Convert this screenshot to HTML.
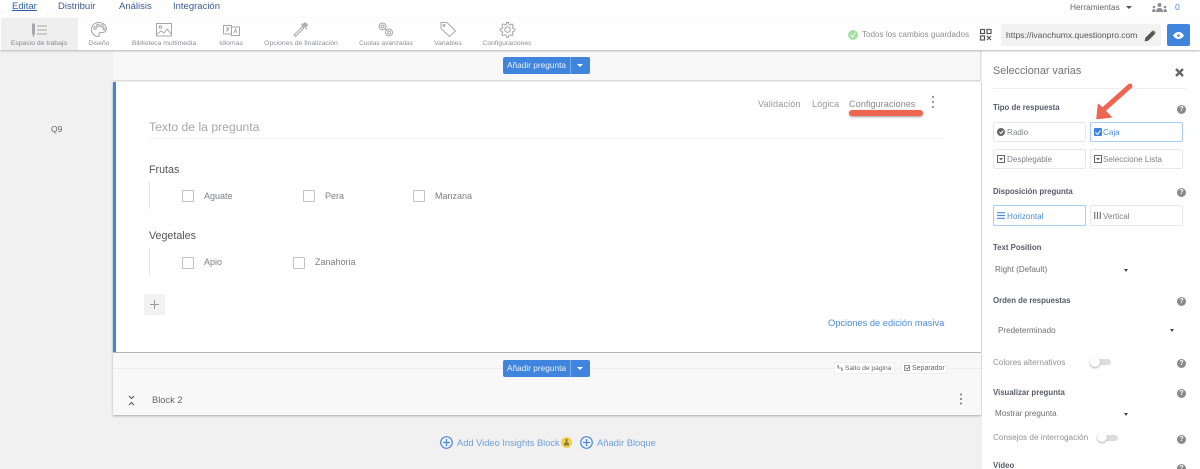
<!DOCTYPE html>
<html><head><meta charset="utf-8">
<style>
html,body{margin:0;padding:0;width:1200px;height:469px;overflow:hidden;background:#f1f1f1;font-family:"Liberation Sans",sans-serif;color:#666}
#w{position:absolute;left:0;top:0;width:1200px;height:469px;overflow:hidden;filter:blur(.3px)}
.a{position:absolute}
.t{position:absolute;white-space:nowrap;line-height:12px}
.nav{font-size:9.500px;color:#3c5a94;top:1px}
.tb{font-size:6.800px;color:#8a8f96;top:39px;line-height:10px;transform:translateX(-50%)}
.btn{position:absolute;width:87px;height:17px;background:#3f85de;border-radius:2px;color:#eaf2fc;font-size:8.300px;line-height:17px;box-sizing:border-box;padding-left:4px;white-space:nowrap}
.btn i{position:absolute;left:67px;top:0;width:1px;height:17px;background:#7aa9e8}
.btn b{position:absolute;left:74px;top:7px;border:3px solid transparent;border-top:3px solid #fff;border-bottom:0}
.box{position:absolute;width:10px;height:10px;border:1px solid #c2c4c9;border-radius:1px;background:#fff}
.opt{font-size:9px;color:#7a7f86}
.h{font-size:7.800px;font-weight:bold;color:#555b66}
.q{position:absolute;width:9px;height:9px;border-radius:50%;background:#8a8a8a;color:#fff;font-size:7px;line-height:9px;text-align:center;font-weight:bold;left:1177px}
.rb{position:absolute;height:20px;border:1px solid #e8e8e8;border-radius:2px;background:#fff;box-sizing:border-box;width:95px}
.rt{font-size:8.100px;color:#7d8288}
.sel{border-color:#a9cdf5}
.caret{position:absolute;border:2.500px solid transparent;border-top:3px solid #444;border-bottom:0}
.tog{position:absolute;width:20px;height:6px;background:#dcdcdc;border-radius:3px}
.tog i{position:absolute;left:-1px;top:-2.500px;width:10px;height:10px;border-radius:50%;background:#fff;box-shadow:0 1px 2px #aaa}
svg{position:absolute;overflow:visible}
.ic{fill:none;stroke:#a4a7ab;stroke-width:1}
</style></head>
<body>
<div id="w">
<!-- top nav -->
<div class="a" style="left:0;top:0;width:1200px;height:18px;background:#fff"></div>
<div class="t nav" style="left:12px;color:#2f5da5;text-decoration:underline">Editar</div>
<div class="t nav" style="left:58px">Distribuir</div>
<div class="t nav" style="left:119px">Análisis</div>
<div class="t nav" style="left:173px">Integración</div>
<div class="t" style="left:1070px;top:1px;font-size:8.300px;color:#666">Herramientas</div>
<div class="caret" style="left:1126px;top:6px;border-left-width:3px;border-right-width:3px;border-top-color:#555"></div>
<svg style="left:1152px;top:3px" width="15" height="9" viewBox="0 0 15 9"><g fill="#8d9095"><circle cx="7.500" cy="2" r="2"/><path d="M4 9c0-3 1.500-4 3.500-4s3.500 1 3.500 4z"/><circle cx="2" cy="4" r="1.300"/><path d="M0 9c0-2 1-3 2-3s1.500.5 1.500 3z"/><circle cx="13" cy="4" r="1.300"/><path d="M15 9c0-2-1-3-2-3s-1.500.5-1.500 3z"/></g></svg>
<div class="t" style="left:1175px;top:1px;font-size:8.500px;color:#4a8ae0">0</div>

<!-- toolbar -->
<div class="a" style="left:0;top:18px;width:1200px;height:32px;background:#fff;box-shadow:0 1px 2px #b5b5b5;z-index:5"></div>
<div style="position:absolute;left:0;top:0;width:1200px;height:60px;z-index:6">
<div class="a" style="left:1px;top:18px;width:77px;height:32px;background:#efefef"></div>
<div class="t tb" style="left:39px;color:#84888e">Espacio de trabajo</div>
<div class="t tb" style="left:99px">Diseño</div>
<div class="t tb" style="left:164px">Biblioteca multimedia</div>
<div class="t tb" style="left:231px">Idiomas</div>
<div class="t tb" style="left:301px">Opciones de finalización</div>
<div class="t tb" style="left:386px;font-size:6.500px">Cuotas avanzadas</div>
<div class="t tb" style="left:448px">Variables</div>
<div class="t tb" style="left:507px">Configuraciones</div>
<!-- icons -->
<svg class="ic" style="left:31px;top:23px" width="16" height="14"><path d="M1.500 1h2v9l-1 3-1-3z" fill="#a4a7ab"/><path d="M6 3h10M6 7h10M6 11h10"/></svg>
<svg class="ic" style="left:91px;top:22px" width="16" height="15"><path d="M8 .5C3.500.5.500 3.500.500 7.500c0 4 3.500 7 6.500 7 1.500 0 1.500-1.200 1-2-.5-1 0-2 1.500-2h2c2 0 4-1.500 4-3.500C15.500 3 12 .5 8 .5z"/><circle cx="4" cy="6" r="1.300"/><circle cx="7" cy="3.500" r="1.300"/><circle cx="11" cy="4" r="1.300"/><circle cx="13" cy="7" r="1"/></svg>
<svg class="ic" style="left:156px;top:23px" width="16" height="14"><rect x=".5" y=".5" width="15" height="12.500"/><circle cx="4.500" cy="4" r="1.300"/><path d="M1 11l4-3 3 2 3-4 4 5"/></svg>
<svg class="ic" style="left:223px;top:25px" width="17" height="11"><rect x=".5" y=".5" width="8" height="8.500"/><rect x="8.500" y="2" width="8" height="8.500"/><path d="M3 3h3.500M4.700 3v3M3 6.500l3-2M11 8l1.500-4 1.500 4"/></svg>
<svg class="ic" style="left:293px;top:22px" width="16" height="15"><path d="M1 13l1.500 1.500L11 6 9.500 4.500z"/><path d="M9 1.500v2M12 .5l.5 2M15 3l-2 .5M14 7l-1.500-1.500" stroke="#8a8d90"/><circle cx="12" cy="3" r="1.800" fill="#b0b3b6"/></svg>
<svg class="ic" style="left:378px;top:22px" width="16" height="15"><circle cx="4.500" cy="4.500" r="3.500"/><circle cx="4.500" cy="4.500" r="1.500"/><circle cx="11" cy="10.500" r="3.500"/><circle cx="11" cy="10.500" r="1.500"/><path d="M7 7l2 1.500"/></svg>
<svg class="ic" style="left:440px;top:22px" width="16" height="15"><path d="M1 .5h6L15.500 9 9.500 14.500 1 6.500z"/><circle cx="4" cy="3.500" r="1"/></svg>
<svg class="ic" style="left:500px;top:22px" width="15" height="15" viewBox="0 0 15 15"><circle cx="7.500" cy="7.500" r="2.800"/><path d="M6.500.5h2l.4 2 1.300.6 1.800-1.100 1.400 1.400-1.100 1.800.6 1.300 2 .4v2l-2 .4-.6 1.300 1.100 1.800-1.400 1.400-1.800-1.100-1.300.6-.4 2h-2l-.4-2-1.300-.6-1.800 1.100-1.400-1.400 1.100-1.800-.6-1.300-2-.4v-2l2-.4.6-1.300L2 3.300l1.400-1.400 1.800 1.100 1.300-.6z"/></svg>
<!-- right of toolbar -->
<div class="a" style="left:848px;top:30px;width:10px;height:10px;border-radius:50%;background:#a5e0a5"></div>
<svg style="left:850px;top:32px" width="6" height="6"><path d="M.5 3l2 2 3-4" fill="none" stroke="#fff" stroke-width="1"/></svg>
<div class="t" style="left:862px;top:29px;font-size:8.100px;color:#8b8f94">Todos los cambios guardados</div>
<svg style="left:980px;top:29px" width="11" height="11" fill="none" stroke="#555" stroke-width="1.200"><rect x=".5" y=".5" width="4" height="4"/><rect x="7" y=".5" width="4" height="4"/><rect x=".5" y="7" width="4" height="4"/><path d="M7 7l4 4M11 7l-4 4"/></svg>
<div class="a" style="left:1001px;top:24px;width:160px;height:22px;background:#f2f2f2;border-radius:2px"></div>
<div class="t" style="left:1006px;top:29px;font-size:8.500px;color:#555;width:132px;overflow:hidden">https://ivanchumx.questionpro.com</div>
<svg style="left:1145px;top:30px" width="11" height="11"><path d="M0 11l.6-3L7.500 1l2.500 2.500L3 10.500zM8.300.3l2.500 2.500" fill="#555" stroke="#555" stroke-width=".6"/></svg>
<div class="a" style="left:1167px;top:24px;width:23px;height:22px;background:#3f85de;border-radius:2px"></div>
<svg style="left:1173px;top:32px" width="11" height="7"><path d="M0 3.500C2 .5 4 0 5.500 0S9 .5 11 3.500C9 6.500 7 7 5.500 7S2 6.500 0 3.500z" fill="#fff"/><circle cx="5.500" cy="3.500" r="1.300" fill="#3f85de"/></svg>
</div>

<!-- left column -->
<div class="a" style="left:113px;top:50px;width:1px;height:32px;background:#ddd"></div>
<div class="t" style="left:51px;top:123px;font-size:8.500px;color:#666">Q9</div>

<!-- card top band -->
<div class="a" style="left:113px;top:50px;width:868px;height:31px;background:#f8f8f8;border-right:1px solid #ddd;border-bottom:1px solid #ddd;box-sizing:border-box"></div>
<div class="btn" style="left:503px;top:57px">Añadir pregunta<i></i><b></b></div>

<!-- white card -->
<div class="a" style="left:113px;top:82px;width:868px;height:270px;background:#fff;box-sizing:border-box;border-left:3px solid #3f85de;box-shadow:0 1px 2px #999"></div>
<div class="t" style="left:758px;top:98px;font-size:9.200px;letter-spacing:.1px;color:#9a9a9a">Validación</div>
<div class="t" style="left:812px;top:98px;font-size:9.200px;color:#9a9a9a">Lógica</div>
<div class="t" style="left:849px;top:98px;font-size:9.200px;color:#8a8a8a">Configuraciones</div>
<div class="a" style="left:849px;top:110px;width:74px;height:6px;background:#ee6652;border-radius:3px;box-shadow:0 1px 2px #999"></div>
<svg style="left:931px;top:95px" width="4" height="14" fill="#9a9a9a"><circle cx="2" cy="2" r="1.200"/><circle cx="2" cy="7" r="1.200"/><circle cx="2" cy="12" r="1.200"/></svg>
<div class="t" style="left:149px;top:120px;font-size:12.200px;line-height:15px;color:#a8a8a8">Texto de la pregunta</div>
<div class="a" style="left:149px;top:138px;width:795px;height:1px;background:#f3f3f3"></div>

<div class="t" style="left:149px;top:164px;font-size:10.700px;color:#555">Frutas</div>
<div class="a" style="left:149px;top:182px;width:1px;height:27px;background:#e8e8e8"></div>
<div class="box" style="left:182px;top:190px"></div>
<div class="t opt" style="left:204px;top:190px">Aguate</div>
<div class="box" style="left:303px;top:190px"></div>
<div class="t opt" style="left:325px;top:190px">Pera</div>
<div class="box" style="left:413px;top:190px"></div>
<div class="t opt" style="left:435px;top:190px">Manzana</div>

<div class="t" style="left:149px;top:230px;font-size:10.700px;color:#555">Vegetales</div>
<div class="a" style="left:149px;top:248px;width:1px;height:28px;background:#e8e8e8"></div>
<div class="box" style="left:182px;top:257px"></div>
<div class="t opt" style="left:204px;top:256px">Apio</div>
<div class="box" style="left:293px;top:257px"></div>
<div class="t opt" style="left:315px;top:256px">Zanahoria</div>

<div class="a" style="left:144px;top:294px;width:21px;height:21px;background:#f2f2f2;border-radius:1px"></div>
<svg style="left:150px;top:300px" width="9" height="9"><path d="M4.500 0v9M0 4.500h9" stroke="#999" stroke-width="1"/></svg>
<div class="t" style="left:828px;top:317px;font-size:9.300px;color:#4a8ae0">Opciones de edición masiva</div>

<!-- lower band -->
<div class="a" style="left:113px;top:353px;width:868px;height:62px;background:#f8f8f8;box-shadow:0 1px 2px #aaa"></div>
<div class="a" style="left:113px;top:368px;width:868px;height:1px;background:#eee"></div>
<div class="btn" style="left:503px;top:360px">Añadir pregunta<i></i><b></b></div>
<div class="a" style="left:834px;top:362px;width:61px;height:12px;background:#fff;border:1px solid #eee;box-sizing:border-box"></div>
<div class="t" style="left:845px;top:362.500px;font-size:6.700px;color:#666">Salto de página</div>
<svg style="left:837px;top:365px" width="6" height="6" fill="none" stroke="#777" stroke-width=".8"><path d="M1 0v3h4v3M0 1h2M4 5h2"/></svg>
<div class="a" style="left:901px;top:362px;width:46px;height:12px;background:#fff;border:1px solid #eee;box-sizing:border-box"></div>
<div class="t" style="left:912px;top:362.500px;font-size:7px;color:#666">Separador</div>
<svg style="left:904px;top:365px" width="7" height="6" fill="none" stroke="#777" stroke-width=".8"><rect x=".5" y=".5" width="5" height="5"/><path d="M1.500 2.500l1.500 1.500 3-3"/></svg>
<svg style="left:128px;top:395px" width="7" height="11" fill="none" stroke="#555" stroke-width="1"><path d="M1 1l2.500 2.500L6 1M1 10l2.500-2.500L6 10"/></svg>
<div class="t" style="left:152px;top:394px;font-size:9.300px;color:#666">Block 2</div>
<svg style="left:959px;top:393px" width="4" height="12" fill="#8a8a8a"><circle cx="2" cy="1.500" r="1.100"/><circle cx="2" cy="6" r="1.100"/><circle cx="2" cy="10.500" r="1.100"/></svg>

<!-- bottom links -->
<svg style="left:440px;top:436px" width="13" height="13" fill="none" stroke="#4a8ae0" stroke-width="1.200"><circle cx="6.500" cy="6.500" r="5.800"/><path d="M6.500 3v7M3 6.500h7"/></svg>
<div class="t" style="left:457px;top:437px;font-size:9.300px;color:#6f9fdf">Add Video Insights Block</div>
<div class="a" style="left:561px;top:437px;width:11px;height:11px;border-radius:50%;background:#f2d04a"></div>
<svg style="left:564px;top:439px" width="5" height="7"><path d="M1.500 0h2v4h1.500v2.500H0V4h1.500z" fill="#8a7a3a"/></svg>
<svg style="left:580px;top:436px" width="13" height="13" fill="none" stroke="#4a8ae0" stroke-width="1.200"><circle cx="6.500" cy="6.500" r="5.800"/><path d="M6.500 3v7M3 6.500h7"/></svg>
<div class="t" style="left:597px;top:437px;font-size:9.400px;color:#6f9fdf">Añadir Bloque</div>

<!-- right panel -->
<div class="a" style="left:982px;top:50px;width:218px;height:419px;background:#fff"></div>
<div class="t" style="left:993px;top:65px;font-size:10.800px;color:#6f7378">Seleccionar varias</div>
<svg style="left:1175px;top:68px" width="9" height="9"><path d="M1 1l7 7M8 1l-7 7" stroke="#666" stroke-width="2.400"/></svg>
<div class="a" style="left:993px;top:88px;width:193px;height:1px;background:#eee"></div>

<div class="t h" style="left:993px;top:102px">Tipo de respuesta</div>
<div class="q" style="top:105px">?</div>
<div class="rb" style="left:993px;top:122px;height:20px;width:93px"></div>
<div class="a" style="left:997px;top:128px;width:8px;height:8px;border-radius:50%;background:#666"></div>
<svg style="left:998.500px;top:130px" width="5" height="4"><path d="M.5 2l1.500 1.500L4.500.5" fill="none" stroke="#fff"/></svg>
<div class="t rt" style="left:1007px;top:127px">Radio</div>
<div class="rb sel" style="left:1090px;top:122px;width:93px;height:20px"></div>
<div class="a" style="left:1094px;top:128px;width:8px;height:8px;border-radius:1px;background:#3f85de"></div>
<svg style="left:1095px;top:129.500px" width="6" height="5"><path d="M.5 2.500l2 2L5.500.5" fill="none" stroke="#fff"/></svg>
<div class="t rt" style="left:1103px;top:127px;color:#4a8ae0">Caja</div>

<div class="rb" style="left:993px;top:149px;width:93px;height:20px"></div>
<svg style="left:997px;top:155px" width="8" height="8" fill="none" stroke="#666"><rect x=".5" y=".5" width="7" height="7"/><path d="M2 3h4L4 5.500z" fill="#666" stroke="none"/></svg>
<div class="t rt" style="left:1007px;top:154px">Desplegable</div>
<div class="rb" style="left:1090px;top:149px;width:93px;height:20px"></div>
<svg style="left:1094px;top:155px" width="8" height="8" fill="none" stroke="#666"><rect x=".5" y=".5" width="7" height="7"/><path d="M2 3h4L4 5.500z" fill="#666" stroke="none"/></svg>
<div class="t rt" style="left:1103px;top:154px">Seleccione Lista</div>

<div class="t h" style="left:993px;top:186px">Disposición pregunta</div>
<div class="q" style="top:188px">?</div>
<div class="rb sel" style="left:993px;top:205px;width:93px;height:21px"></div>
<svg style="left:997px;top:212px" width="8" height="7"><path d="M0 .7h8M0 3.500h8M0 6.300h8" stroke="#4a8ae0" stroke-width="1.200"/></svg>
<div class="t rt" style="left:1007px;top:211px;color:#4a8ae0">Horizontal</div>
<div class="rb" style="left:1090px;top:205px;width:93px;height:21px"></div>
<svg style="left:1094px;top:212px" width="7" height="7"><path d="M.7 0v7M3.500 0v7M6.300 0v7" stroke="#777" stroke-width="1.200"/></svg>
<div class="t rt" style="left:1103px;top:211px">Vertical</div>

<div class="t h" style="left:993px;top:242px">Text Position</div>
<div class="t rt" style="left:995px;top:264px;color:#6a6e73">Right (Default)</div>
<div class="caret" style="left:1124px;top:269px"></div>

<div class="t h" style="left:993px;top:295px">Orden de respuestas</div>
<div class="q" style="top:297px">?</div>
<div class="t rt" style="left:998px;top:325px;color:#6a6e73">Predeterminado</div>
<div class="caret" style="left:1170px;top:329px"></div>

<div class="t" style="left:993px;top:357px;font-size:8.200px;color:#8f9397">Colores alternativos</div>
<div class="tog" style="left:1091px;top:359px"><i></i></div>
<div class="q" style="top:359px">?</div>

<div class="t h" style="left:993px;top:387px">Visualizar pregunta</div>
<div class="q" style="top:389px">?</div>
<div class="t rt" style="left:995px;top:408px;color:#6a6e73">Mostrar pregunta</div>
<div class="caret" style="left:1124px;top:413px"></div>

<div class="t" style="left:993px;top:432px;font-size:8.200px;color:#8f9397">Consejos de interrogación</div>
<div class="tog" style="left:1098px;top:434.500px"><i></i></div>
<div class="q" style="top:435px">?</div>

<div class="t h" style="left:993px;top:460px">Vídeo</div>
<div class="q" style="top:464px">?</div>

<!-- arrow -->
<svg style="left:1088px;top:82px;z-index:9" width="46" height="40"><path d="M42 4L14 29" stroke="#ee6652" stroke-width="5" stroke-linecap="round" fill="none"/><path d="M9 36.500L10.500 22.500 23 35z" fill="#ee6652" stroke="#ee6652" stroke-width="1.500" stroke-linejoin="round"/></svg>
</div>
</body></html>
